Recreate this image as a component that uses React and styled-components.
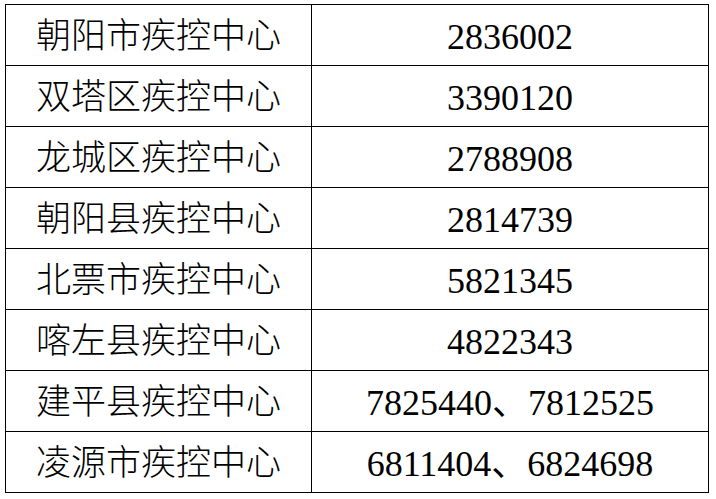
import React from "react";
import styled, { createGlobalStyle } from "styled-components";

const GlobalStyle = createGlobalStyle`
  html, body {
    margin: 0;
    padding: 0;
    background: #ffffff;
  }
`;

const rows = [
  ["朝阳市疾控中心", "2836002"],
  ["双塔区疾控中心", "3390120"],
  ["龙城区疾控中心", "2788908"],
  ["朝阳县疾控中心", "2814739"],
  ["北票市疾控中心", "5821345"],
  ["喀左县疾控中心", "4822343"],
  ["建平县疾控中心", "7825440、7812525"],
  ["凌源市疾控中心", "6811404、6824698"],
];

const Page = styled.div`
  padding: 4px 0 0 5px;
  width: 716px;
  height: 499px;
  box-sizing: border-box;
`;

const Table = styled.table`
  border-collapse: collapse;
  width: 703px;
  table-layout: fixed;
  color: #000;
`;

const Cell = styled.td`
  border: 1px solid #000;
  height: 61px;
  padding: 3px 0 0;
  box-sizing: border-box;
  text-align: center;
  vertical-align: middle;
  font-family: "Liberation Serif", "Noto Sans CJK SC", serif;
  font-size: ${(p) => (p.$num ? "36px" : "35px")};
  font-weight: ${(p) => (p.$num ? 400 : 300)};
  line-height: 1;
  white-space: nowrap;
`;

export default function App() {
  return (
    <>
      <GlobalStyle />
      <Page>
        <Table>
          <colgroup>
            <col style={{ width: "306px" }} />
            <col style={{ width: "397px" }} />
          </colgroup>
          <tbody>
            {rows.map(([name, phone]) => (
              <tr key={name}>
                <Cell>{name}</Cell>
                <Cell $num>{phone}</Cell>
              </tr>
            ))}
          </tbody>
        </Table>
      </Page>
    </>
  );
}
